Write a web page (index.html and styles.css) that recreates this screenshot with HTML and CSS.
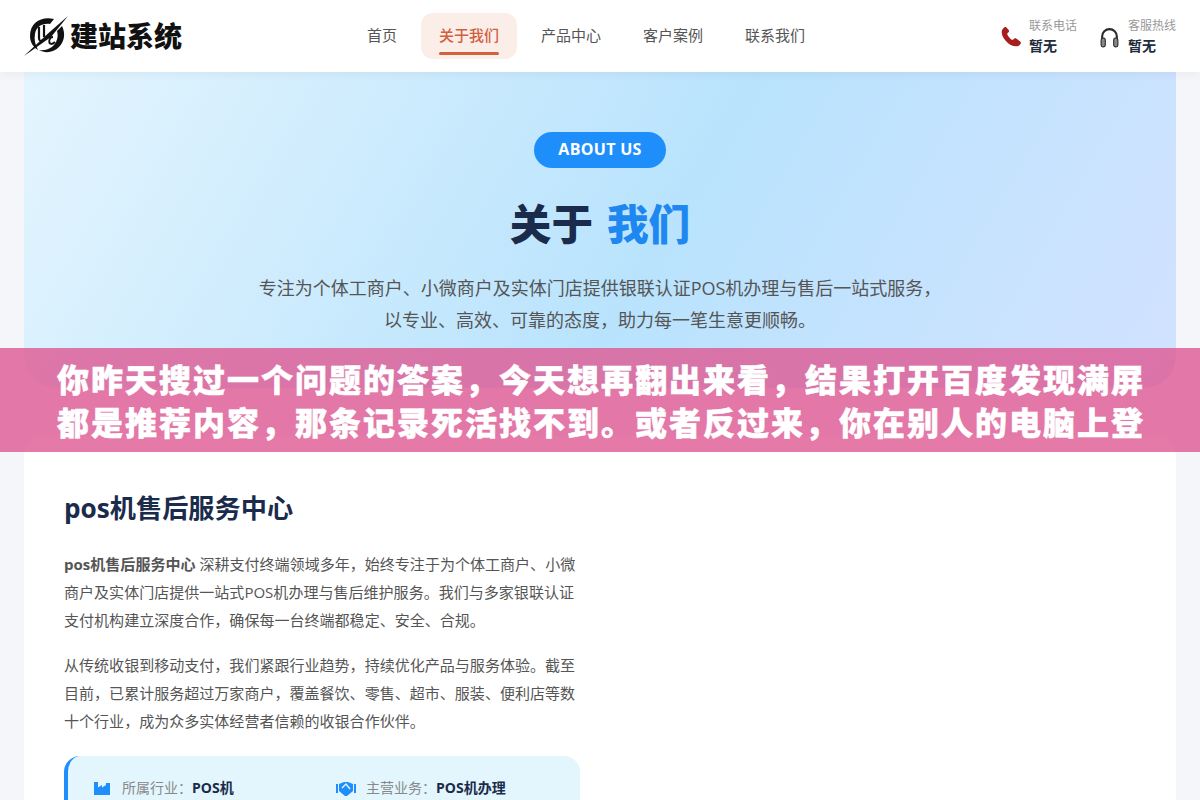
FILE: index.html
```html
<!DOCTYPE html>
<html lang="zh-cn">
<head>
    <meta charset="UTF-8">
    <meta name="viewport" content="width=device-width, initial-scale=1.0">
    <title>关于我们 - 建站系统</title>
    <link rel="stylesheet" href="styles.css">
</head>
<body>
    <div class="header">
        <a class="logo" href="#">
            <svg class="logo-mark" width="44" height="40" viewBox="0 0 44 40">
                <path d="M0 40 L24 17.5 L44 0 L27 21 Z" fill="#111"/>
                <path d="M30 3 C18 0 6 6 6 20 C6 26 9 31 14 34 C11 28 10 24 11 18 C12 11 18 7 26 8 Z" fill="#111"/>
                <path d="M38 10 C42 18 40 26 35 31 C30 36 22 38 15 34 C22 35 29 32 32 26 C34 22 34 18 33 15 Z" fill="#111"/>
                <path d="M15 11 V22 C15 25 17 26 19 24 M20 9 V21" stroke="#111" stroke-width="2.2" fill="none"/>
                <path d="M29 21 C25 21 24 27 27 28 C28 28 30 27 31 26" stroke="#111" stroke-width="1.8" fill="none"/>
            </svg>
            <span class="logo-text">建站系统</span>
        </a>
        <div class="nav">
            <a href="#">首页</a>
            <a href="#" class="active">关于我们</a>
            <a href="#">产品中心</a>
            <a href="#">客户案例</a>
            <a href="#">联系我们</a>
        </div>
        <div class="contact">
            <div class="contact-item">
                <svg class="contact-icon" width="20" height="20" viewBox="1 0.5 19 19">
                    <path d="M3 2 C1 4 1 8 5 13 C9 18 14 19.5 17.5 18.5 C19.5 17.5 20.5 15.5 19.5 14.5 L15.5 11.5 C14.5 11 13.5 11.5 12.5 12.5 C11.5 13 10.5 12.5 8.5 10 C7 8 6.5 7 7.5 6 C8.5 5.5 9 4.5 8.5 3.5 L6 0.8 C5 0.2 4 1 3 2 Z" fill="#a81e1e"/>
                </svg>
                <div>
                    <p class="contact-label">联系电话</p>
                    <p class="contact-value">暂无</p>
                </div>
            </div>
            <div class="contact-item">
                <svg class="contact-icon" width="21" height="21" viewBox="0 0 20 20">
                    <path d="M3 12 V9 a7 7 0 0 1 14 0 V12" stroke="#2b2b2b" stroke-width="2" fill="none"/>
                    <rect x="2" y="10.5" width="4" height="8.5" rx="1.8" fill="#888" stroke="#222"/>
                    <rect x="14" y="10.5" width="4" height="8.5" rx="1.8" fill="#888" stroke="#222"/>
                </svg>
                <div>
                    <p class="contact-label">客服热线</p>
                    <p class="contact-value">暂无</p>
                </div>
            </div>
        </div>
    </div>

    <div class="hero">
        <span class="hero-tag">ABOUT US</span>
        <h1>关于<span class="blue">我们</span></h1>
        <p>专注为个体工商户、小微商户及实体门店提供银联认证POS机办理与售后一站式服务，<br>以专业、高效、可靠的态度，助力每一笔生意更顺畅。</p>
    </div>

    <div class="card">
        <div class="card-left">
            <h2>pos机售后服务中心</h2>
            <p><strong>pos机售后服务中心</strong> 深耕支付终端领域多年，始终专注于为个体工商户、小微商户及实体门店提供一站式POS机办理与售后维护服务。我们与多家银联认证支付机构建立深度合作，确保每一台终端都稳定、安全、合规。</p>
            <p>从传统收银到移动支付，我们紧跟行业趋势，持续优化产品与服务体验。截至目前，已累计服务超过万家商户，覆盖餐饮、零售、超市、服装、便利店等数十个行业，成为众多实体经营者信赖的收银合作伙伴。</p>
            <div class="info-box">
                <div class="info-item">
                    <svg width="16" height="14" viewBox="0 0 16 14">
                        <path d="M0 14 V1 H4 V6.5 L8 4 V6.5 L12 4 V2 H16 V14 Z" fill="#1e8ffa"/>
                    </svg>
                    <span class="info-label">所属行业：</span><b>POS机</b>
                </div>
                <div class="info-item handshake">
                    <svg width="20" height="15" viewBox="0 0 20 15">
                        <rect x="0" y="3" width="2" height="9" fill="#1e8ffa"/>
                        <rect x="18" y="3" width="2" height="9" fill="#1e8ffa"/>
                        <path d="M3 3 L8 1 H12 L17 3 V10 L11 15 H9 L3 10 Z" fill="#1e8ffa"/>
                        <path d="M6 7 L10 3 L14 8" stroke="#e3f6fe" stroke-width="1.4" fill="none"/>
                    </svg>
                    <span class="info-label">主营业务：</span><b>POS机办理</b>
                </div>
            </div>
        </div>
    </div>

    <div class="banner">你昨天搜过一个问题的答案，今天想再翻出来看，结果打开百度发现满屏都是推荐内容，那条记录死活找不到。或者反过来，你在别人的电脑上登</div>
</body>
</html>
```

FILE: styles.css
```css
html, body {
    height: 800px;
    overflow: hidden;
}
body {
    font-family: "Open Sans", "Noto Sans CJK SC", sans-serif;
    background-color: #f5f6fa;
    color: #555;
    margin: 0;
    padding: 0;
    position: relative;
}
p {
    margin: 0;
}
.header {
    position: relative;
    z-index: 2;
    height: 72px;
    padding: 0 24px;
    background-color: #fff;
    box-shadow: 0 2px 10px rgba(0, 0, 0, 0.05);
    display: flex;
    align-items: center;
}
.logo {
    width: 325px;
    display: flex;
    align-items: center;
    gap: 2px;
    color: #111;
    text-decoration: none;
}
.logo-mark {
    flex: none;
}
.logo-text {
    font-size: 28px;
    font-weight: 900;
    line-height: 40px;
}
.nav {
    display: flex;
    gap: 6px;
}
.nav a {
    position: relative;
    height: 46px;
    line-height: 45px;
    padding: 0 18px;
    border-radius: 12px;
    font-size: 15px;
    color: #555;
    text-decoration: none;
}
.nav a.active {
    background-color: #fbeee9;
    color: #d2603f;
    font-weight: 500;
}
.nav a.active::after {
    content: "";
    position: absolute;
    left: 18px;
    right: 18px;
    bottom: 4px;
    height: 3px;
    border-radius: 2px;
    background-color: #d2603f;
}
.contact {
    margin-left: auto;
    display: flex;
    gap: 22px;
}
.contact-item {
    display: flex;
    align-items: center;
    gap: 8px;
}
.contact-icon {
    margin-top: 2px;
}
.contact-label {
    font-size: 12px;
    line-height: 18px;
    color: #999;
}
.contact-value {
    font-size: 14px;
    line-height: 20px;
    margin-top: 1px;
    font-weight: 700;
    color: #1f2d3d;
}
.hero {
    height: 316px;
    box-sizing: border-box;
    margin: 0 24px;
    padding-top: 60px;
    border-radius: 0 0 32px 32px;
    background: linear-gradient(120deg, #e4f5fe 0%, #b9e3fd 55%, #d2e2ff 100%);
    text-align: center;
}
.hero-tag {
    display: inline-block;
    height: 36px;
    line-height: 35px;
    padding: 0 24px;
    border-radius: 18px;
    background-color: #1e8ffa;
    color: #fff;
    font-size: 16px;
    font-weight: 700;
    letter-spacing: 0.3px;
}
.hero h1 {
    margin: 26px 0 0;
    font-size: 41.6px;
    line-height: 60px;
    font-weight: 900;
    color: #1a2b4b;
}
.blue {
    margin-left: 14px;
    color: #1e88f0;
}
.hero p {
    margin-top: 18px;
    font-size: 18px;
    line-height: 32px;
    color: #555;
}
.card {
    margin: 48px 24px 0;
    padding: 50px 40px 0;
    height: 500px;
    box-sizing: border-box;
    border-radius: 20px;
    background-color: #fff;
    display: grid;
    grid-template-columns: 516px 1fr;
}
.card h2 {
    margin: 0 0 20px;
    font-size: 26.2px;
    line-height: 44px;
    font-weight: 700;
    color: #1a2b4b;
}
.card p {
    font-size: 15.04px;
    line-height: 28.2px;
    margin-bottom: 16px;
    color: #555;
}
.info-box {
    margin-top: 21px;
    padding: 22px 26px;
    border-left: 4px solid #1e8ffa;
    border-radius: 16px;
    background-color: #e3f6fe;
    display: grid;
    grid-template-columns: 242px 1fr;
}
.info-item {
    display: flex;
    align-items: center;
    font-size: 14px;
    line-height: 20px;
    color: #1a2b4b;
}
.info-item svg {
    margin-right: 12px;
}
.info-item.handshake svg {
    margin-right: 10px;
}
.info-label {
    color: #888;
}
.banner {
    position: absolute;
    z-index: 3;
    left: 0;
    right: 0;
    top: 348px;
    height: 104px;
    box-sizing: border-box;
    padding: 9px 50px 0 57px;
    overflow: hidden;
    background-color: rgba(222, 88, 146, 0.8);
    color: #fff;
    font-family: "Noto Sans CJK SC", sans-serif;
    font-size: 32px;
    font-weight: 900;
    line-height: 43px;
    letter-spacing: 2px;
    -webkit-text-stroke: 0.5px #fff;
}
```
